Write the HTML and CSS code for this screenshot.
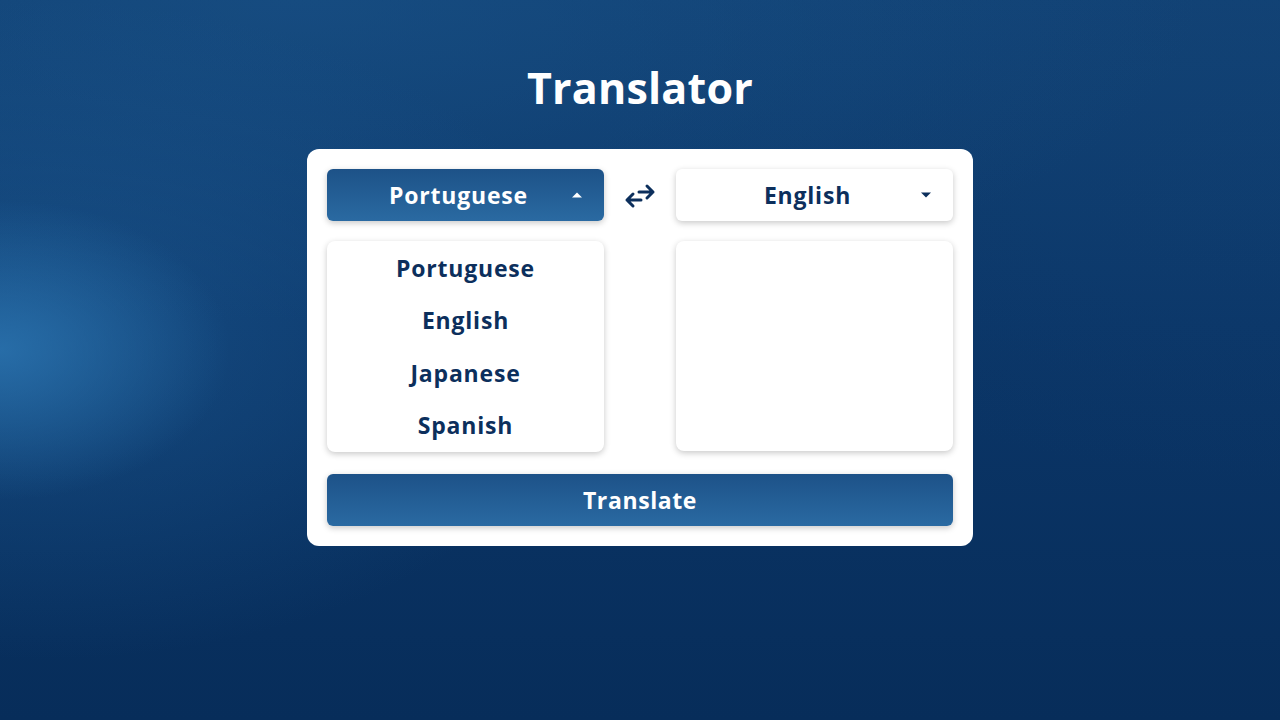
FILE: index.html
```html
<!DOCTYPE html>
<html lang="en">
<head>
<meta charset="utf-8">
<title>Translator</title>
<link rel="stylesheet" href="styles.css">
</head>
<body>
<main class="page">
  <h1 class="title">Translator</h1>
  <section class="card">
    <div class="grid">
      <div class="col">
        <button class="select select-active">
          <span class="select-label">Portuguese</span>
          <svg class="caret" width="12" height="8" viewBox="0 0 12 8"><path d="M1 6.5 L6 1.5 L11 6.5 Z" fill="#ffffff"/></svg>
        </button>
        <ul class="menu">
          <li>Portuguese</li>
          <li>English</li>
          <li>Japanese</li>
          <li>Spanish</li>
        </ul>
      </div>
      <div class="swap">
        <svg width="44" height="34" viewBox="0 0 44 34"><g fill="none" stroke="#0c2f5c" stroke-width="3" stroke-linecap="round" stroke-linejoin="round"><path d="M21 14 H35 M29 8 L35 14 L29 20"/><path d="M23 22 H9 M15 16 L9 22 L15 28"/></g></svg>
      </div>
      <div class="col">
        <button class="select">
          <span class="select-label">English</span>
          <svg class="caret" width="12" height="8" viewBox="0 0 12 8"><path d="M1 1.5 L6 6.5 L11 1.5 Z" fill="#0c2f5c"/></svg>
        </button>
        <div class="output"></div>
      </div>
    </div>
    <button class="translate">Translate</button>
  </section>
</main>
</body>
</html>
```
FILE: styles.css
```css
* { box-sizing: border-box; }
html, body { margin: 0; padding: 0; height: 100%; }
body {
  font-family: "Open Sans", "Noto Sans", sans-serif;
  background-color: #0a3263;
  background-image:
    radial-gradient(ellipse 230px 150px at 0px 350px, rgba(44,118,178,0.8), rgba(44,118,178,0) 100%),
    radial-gradient(ellipse 560px 330px at 40px 330px, rgba(30,92,150,0.55), rgba(30,92,150,0) 100%),
    radial-gradient(ellipse 900px 320px at 300px 0px, rgba(26,84,138,0.55), rgba(26,84,138,0) 100%),
    radial-gradient(ellipse 700px 400px at 1280px 80px, rgba(20,70,120,0.3), rgba(20,70,120,0) 100%),
    linear-gradient(180deg, #114174 0%, #0b3668 45%, #072d5a 100%);
  overflow: hidden;
}
.page {
  display: flex;
  flex-direction: column;
  align-items: center;
  padding-top: 58px;
}
.title {
  margin: 0;
  color: #ffffff;
  font-size: 43px;
  font-weight: 700;
  line-height: 60px;
  letter-spacing: 0.2px;
}
.card {
  margin-top: 31px;
  width: 666px;
  background: #ffffff;
  border-radius: 12px;
  padding: 20px;
  display: flex;
  flex-direction: column;
  gap: 22px;
}
.grid {
  display: grid;
  grid-template-columns: 277px 1fr 277px;
}
.col {
  display: flex;
  flex-direction: column;
  gap: 20px;
}
.select {
  position: relative;
  height: 52px;
  border: none;
  border-radius: 6px;
  background: #ffffff;
  box-shadow: 0 2px 6px rgba(0,0,0,0.22);
  display: flex;
  align-items: center;
  justify-content: center;
  font-family: inherit;
  font-size: 23px;
  font-weight: 700;
  letter-spacing: 0.8px;
  color: #0c2f5c;
  padding: 0 14px 0 0;
}
.select-active {
  background: linear-gradient(180deg, #1d5288 0%, #2a6aa2 100%);
  color: #ffffff;
}
.caret {
  position: absolute;
  right: 21px;
  top: 22px;
}
.menu {
  list-style: none;
  margin: 0;
  padding: 0;
  height: 211px;
  border-radius: 8px;
  background: #ffffff;
  box-shadow: 0 2px 6px rgba(0,0,0,0.22);
  display: flex;
  flex-direction: column;
  justify-content: center;
}
.menu li {
  text-align: center;
  font-size: 23px;
  font-weight: 700;
  letter-spacing: 0.8px;
  color: #0c2f5c;
  line-height: 52.5px;
}
.output {
  height: 210px;
  border-radius: 8px;
  background: #ffffff;
  box-shadow: 0 2px 6px rgba(0,0,0,0.22);
}
.swap {
  display: flex;
  justify-content: center;
  height: 52px;
  align-items: center;
}
.translate {
  height: 52px;
  border: none;
  border-radius: 6px;
  background: linear-gradient(180deg, #1d5288 0%, #2a6aa2 100%);
  box-shadow: 0 2px 6px rgba(0,0,0,0.22);
  color: #ffffff;
  font-family: inherit;
  font-size: 23px;
  font-weight: 700;
  letter-spacing: 0.6px;
}
```
